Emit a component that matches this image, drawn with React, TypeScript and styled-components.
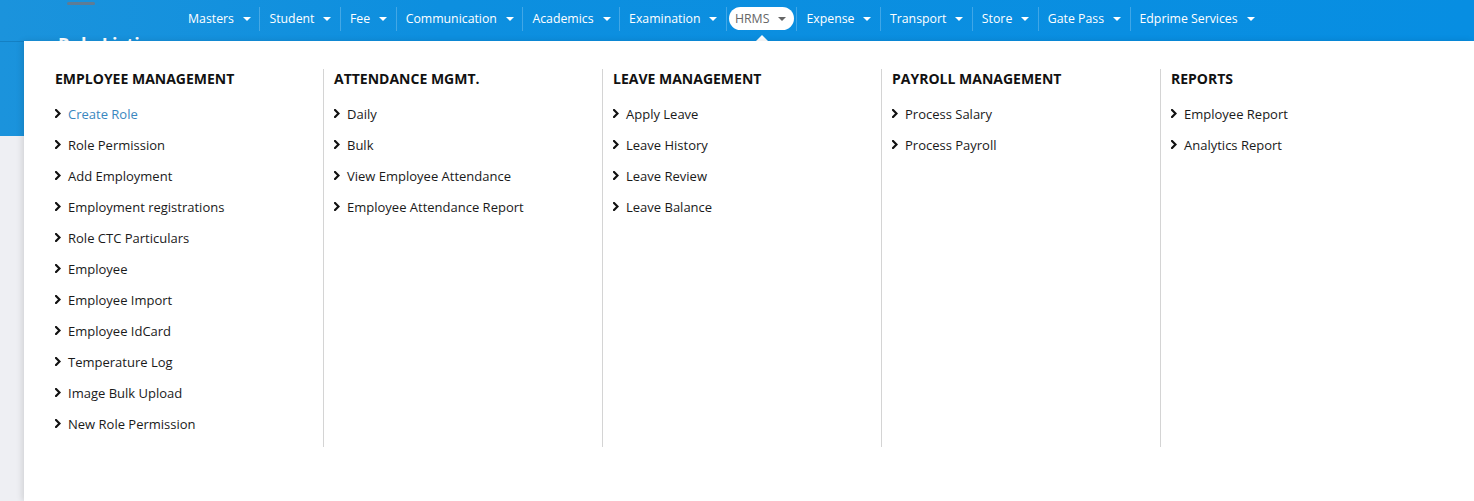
import styled, { createGlobalStyle } from "styled-components";

const GlobalStyle = createGlobalStyle`
  html, body {
    margin: 0;
    padding: 0;
    height: 100%;
    overflow: hidden;
    background: #eeeff3;
    font-family: "Open Sans", "Noto Sans", sans-serif;
  }
  #root {
    height: 100%;
  }
`;

const navItems = [
  "Masters",
  "Student",
  "Fee",
  "Communication",
  "Academics",
  "Examination",
  "HRMS",
  "Expense",
  "Transport",
  "Store",
  "Gate Pass",
  "Edprime Services",
];

const menu = [
  {
    title: "EMPLOYEE MANAGEMENT",
    links: [
      "Create Role",
      "Role Permission",
      "Add Employment",
      "Employment registrations",
      "Role CTC Particulars",
      "Employee",
      "Employee Import",
      "Employee IdCard",
      "Temperature Log",
      "Image Bulk Upload",
      "New Role Permission",
    ],
  },
  {
    title: "ATTENDANCE MGMT.",
    links: ["Daily", "Bulk", "View Employee Attendance", "Employee Attendance Report"],
  },
  {
    title: "LEAVE MANAGEMENT",
    links: ["Apply Leave", "Leave History", "Leave Review", "Leave Balance"],
  },
  {
    title: "PAYROLL MANAGEMENT",
    links: ["Process Salary", "Process Payroll"],
  },
  {
    title: "REPORTS",
    links: ["Employee Report", "Analytics Report"],
  },
];

const Caret = ({ color }: { color: string }) => (
  <svg width="8" height="4" viewBox="0 0 8 4">
    <path d="M0 0 L8 0 L4 4 Z" fill={color} />
  </svg>
);

const Chevron = () => (
  <svg width="6" height="9" viewBox="0 0 6 9">
    <polyline
      points="1,1 4.5,4.5 1,8"
      fill="none"
      stroke="#111"
      strokeWidth="2.2"
      strokeLinecap="square"
    />
  </svg>
);

const App = () => {
  return (
    <Page>
      <GlobalStyle />
      <Hero>
        <TopBar>
          <LogoArea>
            <LogoStub />
          </LogoArea>
          <Nav>
            {navItems.map((item, i) => (
              <NavGroup key={item}>
                {i > 0 && <Separator />}
                <NavItem $active={item === "HRMS"}>
                  {item}
                  <Caret color={item === "HRMS" ? "#666" : "#fff"} />
                  {item === "HRMS" && <Pointer />}
                </NavItem>
              </NavGroup>
            ))}
          </Nav>
        </TopBar>
        <PageTitle>Role Listing</PageTitle>
      </Hero>

      <MegaMenu>
        <Columns>
          {menu.map((col, i) => (
            <Column key={col.title} $first={i === 0}>
              <ColumnTitle>{col.title}</ColumnTitle>
              <LinkList>
                {col.links.map((link) => (
                  <LinkRow key={link} $active={link === "Create Role"}>
                    <Chevron />
                    {link}
                  </LinkRow>
                ))}
              </LinkList>
            </Column>
          ))}
        </Columns>
      </MegaMenu>
    </Page>
  );
};

export default App;

const Page = styled.div`
  position: relative;
  height: 100%;
  background: #eeeff3;
`;

const Hero = styled.div`
  height: 136px;
  background: linear-gradient(90deg, #1b93dc 0%, #0d8fdf 30%, #078ee2 100%);
`;

const TopBar = styled.div`
  display: flex;
  align-items: flex-start;
  height: 41px;
  box-shadow: 0 1px 0 rgba(0, 70, 120, 0.25);
`;

const LogoArea = styled.div`
  width: 179px;
  padding-left: 67px;
  box-sizing: border-box;
`;

const LogoStub = styled.div`
  width: 28px;
  height: 3px;
  margin-top: 2px;
  border-radius: 2px;
  background: #5f7c95;
`;

const Nav = styled.nav`
  display: flex;
  align-items: center;
  height: 37px;
`;

const NavGroup = styled.div`
  display: flex;
  align-items: center;
`;

const Separator = styled.span`
  width: 1px;
  height: 24px;
  background: rgba(255, 255, 255, 0.22);
`;

const NavItem = styled.div<{ $active?: boolean }>`
  position: relative;
  display: flex;
  align-items: center;
  gap: 9px;
  height: 23px;
  padding: ${(p) => (p.$active ? "0 8px 0 6px" : "0 8.5px 0 9px")};
  margin: ${(p) => (p.$active ? "0 2px 0 2px" : "0")};
  border-radius: 12px;
  background: ${(p) => (p.$active ? "#fff" : "transparent")};
  color: ${(p) => (p.$active ? "#666" : "#fff")};
  font-size: 12.3px;
  white-space: nowrap;
`;

const Pointer = styled.span`
  position: absolute;
  left: 50%;
  bottom: -11px;
  margin-left: -6px;
  width: 0;
  height: 0;
  border-left: 6px solid transparent;
  border-right: 6px solid transparent;
  border-bottom: 6px solid #fff;
`;

const PageTitle = styled.h1`
  margin: -9px 0 0;
  padding: 0 0 0 58px;
  color: #fff;
  font-size: 18px;
  font-weight: 700;
  line-height: 24px;
`;

const MegaMenu = styled.div`
  position: absolute;
  top: 41px;
  left: 24px;
  right: 0;
  bottom: 0;
  padding: 28px 0 0 20px;
  background: #fff;
  box-shadow: -2px 0 6px rgba(0, 0, 0, 0.12);
`;

const Columns = styled.div`
  display: flex;
  align-items: stretch;
`;

const Column = styled.div<{ $first?: boolean }>`
  width: 279px;
  box-sizing: border-box;
  padding: 0 0 8px 10px;
  border-left: 1px solid ${(p) => (p.$first ? "transparent" : "#d4d4d4")};
`;

const ColumnTitle = styled.h3`
  margin: 0;
  height: 20px;
  line-height: 20px;
  font-size: 14px;
  font-weight: 700;
  color: #111;
`;

const LinkList = styled.ul`
  list-style: none;
  margin: 9px 0 0;
  padding: 0;
`;

const LinkRow = styled.li<{ $active?: boolean }>`
  display: flex;
  align-items: center;
  gap: 7px;
  height: 31px;
  font-size: 13px;
  color: ${(p) => (p.$active ? "#3a87c0" : "#1a1a1a")};
`;
